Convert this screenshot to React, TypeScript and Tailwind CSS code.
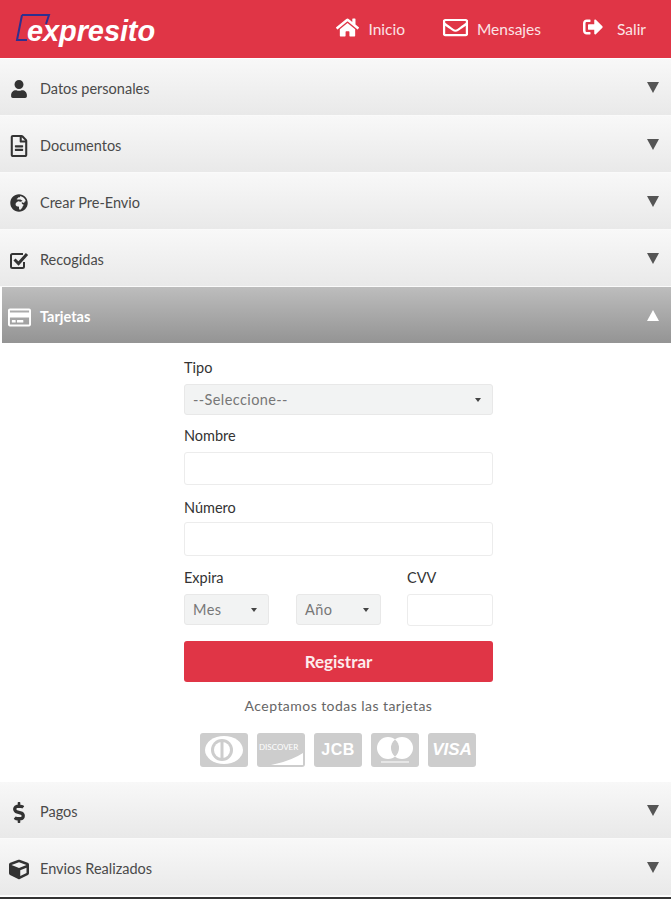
import React from "react";
import {
  FaUser,
  FaRegFileAlt,
  FaGlobeAfrica,
  FaRegCreditCard,
  FaDollarSign,
  FaCube,
  FaHome,
  FaRegEnvelope,
  FaSignOutAlt,
} from "react-icons/fa";

const Arrow = ({ up }: { up?: boolean }) => (
  <svg viewBox="0 0 12 11" className={`h-[11px] w-3 ${up ? "rotate-180 fill-white" : "fill-[#555]"}`}>
    <path d="M0 0h12L6 11z" />
  </svg>
);

const CheckIcon = () => (
  <svg viewBox="0 0 20 19" className="h-[19px] w-5 shrink-0 fill-none stroke-[#333]">
    <path d="M14 3H3.5A1.5 1.5 0 0 0 2 4.5v11A1.5 1.5 0 0 0 3.5 17h10a1.5 1.5 0 0 0 1.5-1.5V11" strokeWidth="2" />
    <path d="M5.5 8.5l4 4L18 3" strokeWidth="3" />
  </svg>
);

const Row = ({
  icon,
  label,
  active,
}: {
  icon: React.ReactNode;
  label: string;
  active?: boolean;
}) => (
  <div
    className={`flex h-[57px] items-center border-b pr-3 ${
      active
        ? "ml-[2px] border-white bg-gradient-to-b from-[#bdbdbd] to-[#949494] pl-[7px] font-bold text-white"
        : "border-[#fafafa] bg-gradient-to-b from-[#f8f8f8] to-[#e9e9e9] pl-[9px] text-[#4a4a4a]"
    }`}
  >
    <span className={`mt-1 flex w-[20px] shrink-0 justify-center ${active ? "text-white" : "text-[#333]"}`}>{icon}</span>
    <span className="ml-[11px] mt-1 flex-1 text-[14.5px]">{label}</span>
    <Arrow up={active} />
  </div>
);

const NavLink = ({ icon, label, gap }: { icon: React.ReactNode; label: string; gap: string }) => (
  <div className={`flex items-center ${gap}`}>
    <span className="text-[23px]">{icon}</span>
    <span className="mt-[5px] text-[15.5px] text-[#fbe3e5]">{label}</span>
  </div>
);

const Label = ({ children }: { children: React.ReactNode }) => (
  <p className="text-[14.5px] leading-4 text-[#333]">{children}</p>
);

const Select = ({ label, className }: { label: string; className: string }) => (
  <div
    className={`flex items-center justify-between rounded-[3px] border border-[#e8e8e8] bg-[#f2f3f3] pl-2 pr-[11px] text-[14.5px] tracking-[0.4px] text-[#777] ${className}`}
  >
    <span>{label}</span>
    <svg viewBox="0 0 6 4" className="h-1 w-[6px] fill-[#444]">
      <path d="M0 0h6L3 4z" />
    </svg>
  </div>
);

const CardLogo = ({ children }: { children: React.ReactNode }) => (
  <div className="relative flex h-[34px] w-[48px] items-center justify-center overflow-hidden rounded-[3px] bg-[#cdcdcd] font-bold text-white">
    {children}
  </div>
);

export default function App() {
  return (
    <div className="h-[900px] w-[671px] overflow-hidden bg-white font-['Lato',sans-serif]">
      <header className="flex h-[58px] items-center bg-[#e03546] pr-[25px] text-white">
        <div className="relative ml-[15px] h-[58px] w-[145px]">
          <svg viewBox="0 0 36 28" className="absolute left-0 top-[14px] h-[28px] w-[36px] fill-none stroke-[#2e2f8f] stroke-2">
            <path d="M7 1h27l-3 9M12 26H2L7 1" />
          </svg>
          <span className="absolute left-[12px] top-[15px] font-['Liberation_Sans',sans-serif] text-[29px] font-bold italic leading-8 tracking-[-0.1px] text-white">
            expresito
          </span>
        </div>
        <nav className="ml-auto flex items-center pb-1">
          <NavLink icon={<FaHome />} label="Inicio" gap="gap-[9px]" />
          <div className="ml-[39px]">
            <NavLink icon={<FaRegEnvelope className="scale-x-110" />} label="Mensajes" gap="gap-[10px]" />
          </div>
          <div className="ml-[42px]">
            <NavLink icon={<FaSignOutAlt className="text-[20px]" />} label="Salir" gap="gap-[14px]" />
          </div>
        </nav>
      </header>

      <div className="pt-[1px]">
        <Row icon={<FaUser className="text-[18px]" />} label="Datos personales" />
        <Row icon={<FaRegFileAlt className="text-[22px]" />} label="Documentos" />
        <Row icon={<FaGlobeAfrica className="text-[18px]" />} label="Crear Pre-Envio" />
        <Row icon={<CheckIcon />} label="Recogidas" />
        <Row icon={<FaRegCreditCard className="shrink-0 text-[23px]" />} label="Tarjetas" active />
      </div>

      <section className="ml-[184px] h-[438px] w-[309px] pt-4">
        <Label>Tipo</Label>
        <Select label="--Seleccione--" className="mt-2 h-[31px] w-full" />
        <div className="mt-[13px]">
          <Label>Nombre</Label>
          <div className="mt-2 h-[33px] rounded-[3px] border border-[#ececec] bg-white" />
        </div>
        <div className="mt-[15px]">
          <Label>Número</Label>
          <div className="mt-[6px] h-[34px] rounded-[3px] border border-[#ececec] bg-white" />
        </div>
        <div className="mt-[14px] flex">
          <div className="w-[112px]">
            <Label>Expira</Label>
            <Select label="Mes" className="mt-2 h-[31px] w-[85px]" />
          </div>
          <div className="w-[111px] pt-6">
            <Select label="Año" className="h-[31px] w-[85px]" />
          </div>
          <div>
            <Label>CVV</Label>
            <div className="mt-2 h-[32px] w-[86px] rounded-[3px] border border-[#ececec] bg-white" />
          </div>
        </div>
        <button className="mt-[15px] h-[41px] w-full rounded-[3px] bg-[#e03546] pt-[1px] text-[17px] font-bold text-[#fdeced]">
          Registrar
        </button>
        <p className="mt-[16px] text-center text-[14px] leading-4 tracking-[0.45px] text-[#666]">
          Aceptamos todas las tarjetas
        </p>
        <div className="ml-[16px] mt-[19px] flex gap-[9px]">
          <CardLogo>
            <svg viewBox="0 0 48 34" className="h-[34px] w-[48px]">
              <ellipse cx="24" cy="17" rx="19" ry="14" fill="#fff" />
              <circle cx="22" cy="17" r="11" fill="#cdcdcd" />
              <circle cx="22" cy="17" r="8" fill="#fff" />
              <rect x="20.5" y="9" width="3" height="16" fill="#cdcdcd" />
            </svg>
          </CardLogo>
          <CardLogo>
            <span className="absolute left-[2px] top-[9px] text-[8px] font-normal leading-[10px]">DISCOVER</span>
            <svg viewBox="0 0 48 34" className="absolute inset-0 h-[34px] w-[48px]">
              <path d="M14 32Q34 28 46 20v12z" fill="#fff" />
            </svg>
          </CardLogo>
          <CardLogo>
            <span className="font-['Liberation_Sans',sans-serif] text-[16px] tracking-[0.5px]">JCB</span>
          </CardLogo>
          <CardLogo>
            <svg viewBox="0 0 48 34" className="h-[34px] w-[48px]">
              <circle cx="17" cy="15" r="11" fill="#fff" />
              <circle cx="31" cy="15" r="11" fill="#fff" />
              <path d="M24 6.5a11 11 0 0 1 0 17a11 11 0 0 1 0-17z" fill="#cdcdcd" />
              <rect x="10" y="28" width="28" height="2" fill="#e6e6e6" />
            </svg>
          </CardLogo>
          <CardLogo>
            <span className="font-['Liberation_Sans',sans-serif] text-[17px] italic">VISA</span>
          </CardLogo>
        </div>
      </section>

      <Row icon={<FaDollarSign className="text-[21px]" />} label="Pagos" />
      <Row icon={<FaCube className="text-[21px]" />} label="Envios Realizados" />
      <div className="mt-[1px] h-[2px] bg-[#333]" />
    </div>
  );
}
